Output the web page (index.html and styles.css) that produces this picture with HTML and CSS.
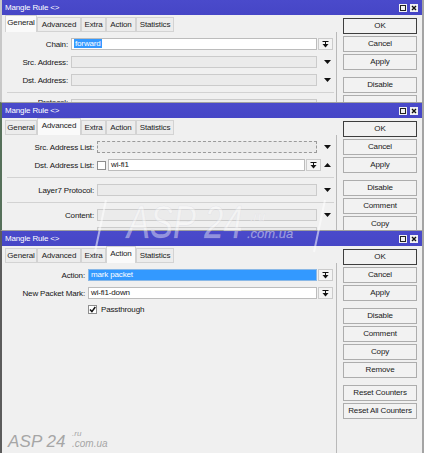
FILE: index.html
```html
<!DOCTYPE html>
<html>
<head>
<meta charset="utf-8">
<title>Mangle Rule</title>
<link rel="stylesheet" href="styles.css">
</head>
<body>
<div class="desktop">

  <!-- Window 1 : General tab -->
  <section class="win w1">
    <header class="title">
      <span class="title-text">Mangle Rule &lt;&gt;</span>
      <span class="ctrls">
        <span class="ctl"><svg width="8" height="8" viewBox="0 0 8 8"><rect width="8" height="8" fill="#f2f2f2"/><rect x="1.5" y="1.5" width="5" height="5" fill="none" stroke="#222"/></svg></span>
        <span class="ctl"><svg width="8" height="8" viewBox="0 0 8 8"><rect width="8" height="8" fill="#f2f2f2"/><path d="M2 2l4 4M6 2l-4 4" stroke="#111" stroke-width="1.4"/></svg></span>
      </span>
    </header>
    <div class="body">
      <div class="main">
        <nav class="tabs">
          <span class="tab t-gen active">General</span><span class="tab t-adv">Advanced</span><span class="tab t-ext">Extra</span><span class="tab t-act">Action</span><span class="tab t-stat">Statistics</span>
        </nav>
        <div class="form f-general">
          <div class="row">
            <span class="lbl">Chain:</span>
            <span class="field white"><span class="sel">forward</span></span>
            <span class="trail"><span class="cbtn"><svg width="7" height="7" viewBox="0 0 7 7"><path d="M0.5 0.5h6M3.5 1v2" stroke="#111"/><path d="M0.5 3h6l-3 3.5z" fill="#111"/></svg></span></span>
          </div>
          <div class="row">
            <span class="lbl">Src. Address:</span>
            <span class="field"></span>
            <span class="trail center"><svg width="7" height="4" viewBox="0 0 7 4"><path d="M0 0h7l-3.5 4z" fill="#111"/></svg></span>
          </div>
          <div class="row">
            <span class="lbl">Dst. Address:</span>
            <span class="field"></span>
            <span class="trail center"><svg width="7" height="4" viewBox="0 0 7 4"><path d="M0 0h7l-3.5 4z" fill="#111"/></svg></span>
          </div>
          <div class="sep"></div>
          <div class="row">
            <span class="lbl"><span class="cut">Protocol:</span></span>
            <span class="field"></span>
            <span class="trail center"></span>
          </div>
        </div>
      </div>
      <div class="divider"></div>
      <div class="buttons">
        <span class="btn def">OK</span>
        <span class="btn">Cancel</span>
        <span class="btn">Apply</span>
        <span class="btn gap">Disable</span>
        <span class="btn stub"></span>
      </div>
    </div>
  </section>

  <!-- Window 2 : Advanced tab -->
  <section class="win w2">
    <header class="title">
      <span class="title-text">Mangle Rule &lt;&gt;</span>
      <span class="ctrls">
        <span class="ctl"><svg width="8" height="8" viewBox="0 0 8 8"><rect width="8" height="8" fill="#f2f2f2"/><rect x="1.5" y="1.5" width="5" height="5" fill="none" stroke="#222"/></svg></span>
        <span class="ctl"><svg width="8" height="8" viewBox="0 0 8 8"><rect width="8" height="8" fill="#f2f2f2"/><path d="M2 2l4 4M6 2l-4 4" stroke="#111" stroke-width="1.4"/></svg></span>
      </span>
    </header>
    <div class="body">
      <div class="main">
        <nav class="tabs">
          <span class="tab t-gen">General</span><span class="tab t-adv active">Advanced</span><span class="tab t-ext">Extra</span><span class="tab t-act">Action</span><span class="tab t-stat">Statistics</span>
        </nav>
        <div class="form f-advanced">
          <div class="row">
            <span class="lbl">Src. Address List:</span>
            <span class="field focus"></span>
            <span class="trail center"><svg width="7" height="4" viewBox="0 0 7 4"><path d="M0 0h7l-3.5 4z" fill="#111"/></svg></span>
          </div>
          <div class="row">
            <span class="lbl">Dst. Address List:</span>
            <span class="check"></span>
            <span class="field white">wi-fi1</span>
            <span class="trail wide">
              <span class="cbtn"><svg width="7" height="7" viewBox="0 0 7 7"><path d="M0.5 0.5h6M3.5 1v2" stroke="#111"/><path d="M0.5 3h6l-3 3.5z" fill="#111"/></svg></span>
              <span class="up"><svg width="7" height="4" viewBox="0 0 7 4"><path d="M0 4h7l-3.5-4z" fill="#111"/></svg></span>
            </span>
          </div>
          <div class="sep"></div>
          <div class="row">
            <span class="lbl">Layer7 Protocol:</span>
            <span class="field"></span>
            <span class="trail center"><svg width="7" height="4" viewBox="0 0 7 4"><path d="M0 0h7l-3.5 4z" fill="#111"/></svg></span>
          </div>
          <div class="sep"></div>
          <div class="row">
            <span class="lbl">Content:</span>
            <span class="field"></span>
            <span class="trail center"><svg width="7" height="4" viewBox="0 0 7 4"><path d="M0 0h7l-3.5 4z" fill="#111"/></svg></span>
          </div>
          <div class="row">
            <span class="lbl"></span>
            <span class="field"></span>
            <span class="trail center"></span>
          </div>
        </div>
      </div>
      <div class="divider"></div>
      <div class="buttons">
        <span class="btn def">OK</span>
        <span class="btn">Cancel</span>
        <span class="btn">Apply</span>
        <span class="btn gap">Disable</span>
        <span class="btn">Comment</span>
        <span class="btn">Copy</span>
      </div>
    </div>
  </section>

  <!-- Window 3 : Action tab -->
  <section class="win w3">
    <header class="title">
      <span class="title-text">Mangle Rule &lt;&gt;</span>
      <span class="ctrls">
        <span class="ctl"><svg width="8" height="8" viewBox="0 0 8 8"><rect width="8" height="8" fill="#f2f2f2"/><rect x="1.5" y="1.5" width="5" height="5" fill="none" stroke="#222"/></svg></span>
        <span class="ctl"><svg width="8" height="8" viewBox="0 0 8 8"><rect width="8" height="8" fill="#f2f2f2"/><path d="M2 2l4 4M6 2l-4 4" stroke="#111" stroke-width="1.4"/></svg></span>
      </span>
    </header>
    <div class="body">
      <div class="main">
        <nav class="tabs">
          <span class="tab t-gen">General</span><span class="tab t-adv">Advanced</span><span class="tab t-ext">Extra</span><span class="tab t-act active">Action</span><span class="tab t-stat">Statistics</span>
        </nav>
        <div class="form f-action">
          <div class="row">
            <span class="lbl">Action:</span>
            <span class="field selected">mark packet</span>
            <span class="trail"><span class="cbtn"><svg width="7" height="7" viewBox="0 0 7 7"><path d="M0.5 0.5h6M3.5 1v2" stroke="#111"/><path d="M0.5 3h6l-3 3.5z" fill="#111"/></svg></span></span>
          </div>
          <div class="row">
            <span class="lbl">New Packet Mark:</span>
            <span class="field white">wi-fi1-down</span>
            <span class="trail"><span class="cbtn"><svg width="7" height="7" viewBox="0 0 7 7"><path d="M0.5 0.5h6M3.5 1v2" stroke="#111"/><path d="M0.5 3h6l-3 3.5z" fill="#111"/></svg></span></span>
          </div>
          <div class="row short">
            <span class="lbl"></span>
            <span class="check"><svg width="7" height="7" viewBox="0 0 7 7"><path d="M1 3.6l1.9 2 3.4-4.6" stroke="#111" stroke-width="1.5" fill="none"/></svg></span>
            <span class="chk-lbl">Passthrough</span>
          </div>
        </div>
      </div>
      <div class="divider"></div>
      <div class="buttons">
        <span class="btn def">OK</span>
        <span class="btn">Cancel</span>
        <span class="btn">Apply</span>
        <span class="btn gap">Disable</span>
        <span class="btn">Comment</span>
        <span class="btn">Copy</span>
        <span class="btn">Remove</span>
        <span class="btn gap">Reset Counters</span>
        <span class="btn">Reset All Counters</span>
      </div>
    </div>
  </section>

  <!-- watermark over the windows -->
  <div class="wm">
    <svg class="wm-frame" width="424" height="453" viewBox="0 0 424 453">
      <path d="M106 200L95 252M325 200L314 252" stroke="rgba(255,255,255,0.55)" stroke-width="2" fill="none"/>
    </svg>
    <span class="wm-main">ASP 24</span>
    <span class="wm-ru">.ru</span>
    <span class="wm-com">.com.ua</span>
  </div>

  <div class="logo">
    <span class="logo-main">ASP 24</span>
    <span class="logo-ru">.ru</span>
    <span class="logo-com">.com.ua</span>
  </div>

</div>
</body>
</html>
```

FILE: styles.css
```css
* { box-sizing: border-box; margin: 0; padding: 0; }

html, body { width: 424px; height: 453px; overflow: hidden; }

body {
  font-family: "Liberation Sans", Arial, sans-serif;
  font-size: 8px;
  letter-spacing: -0.15px;
  color: #151515;
  background: #f0f0f0;
}

.desktop {
  position: relative;
  width: 424px;
  height: 453px;
  overflow: hidden;
  background: #f0f0f0;
}

/* windows on the desktop */
.win {
  position: absolute;
  left: 0;
  width: 424px;
  display: flex;
  flex-direction: column;
  overflow: hidden;
  background: #f0f0f0;
  border-left: 2px solid #8c8c8c;
  border-right: 2px solid #a4a4a4;
}
.w1 { top: 0; height: 102px; border-left-color: #c8c8c8; }
.w2 { top: 102px; height: 128px; border-top: 1px solid #a0a0a0; border-left-color: #56705a; }
.w3 { top: 230px; height: 223px; border-top: 1px solid #a0a0a0; border-left-color: #5c5c5c; }

.title {
  height: 15px;
  flex: none;
  display: flex;
  align-items: center;
  padding: 0 4px 0 3px;
  background: linear-gradient(#4a4acb, #4646c6);
  color: #fff;
}
.title-text { font-size: 8px; }
.ctrls { margin-left: auto; display: flex; gap: 3px; }
.ctl { display: block; width: 8px; height: 8px; }
.ctl svg { display: block; }

.body { flex: 1; display: flex; min-height: 0; }

.main {
  width: 334px;
  flex: none;
  padding-left: 3px;
  display: flex;
  flex-direction: column;
}

/* tabs */
.tabs {
  display: flex;
  align-items: flex-end;
  height: 17px;
  flex: none;
}
.tab {
  height: 15px;
  line-height: 13px;
  text-align: center;
  border: 1px solid #d3d3d3;
  background: #ececec;
  color: #222;
}
.tab.active {
  height: 17px;
  line-height: 14px;
  background: #fafafa;
  border-bottom: none;
}
.t-gen { width: 32px; }
.t-adv { width: 44px; }
.t-ext { width: 25px; }
.t-act { width: 30px; }
.t-stat { width: 38px; }

/* form */
.form { padding-top: 3px; }
.f-general { --lw: 66px; }
.f-advanced { --lw: 92px; }
.f-action { --lw: 83px; }

.row {
  display: flex;
  align-items: center;
  height: 18px;
  padding-right: 2px;
}
.row.short { height: 15px; }
.lbl {
  width: var(--lw);
  flex: none;
  text-align: right;
  padding-right: 3px;
  white-space: nowrap;
}
.cut {
  display: inline-block;
  height: 6px;
  overflow: hidden;
  line-height: 9px;
  vertical-align: top;
  margin-top: -3px;
}
.field {
  flex: 1;
  height: 12px;
  line-height: 10px;
  padding-left: 2px;
  border: 1px solid #cbcbcb;
  background: #ebebeb;
  white-space: nowrap;
  overflow: hidden;
}
.field.white { background: #fff; border-color: #bcbcbc; }
.field.focus { border: 1px dashed #9a9a9a; }
.field.selected { background: #3399ff; border-color: #8ab8e6; color: #fff; }
.sel { background: #3399ff; color: #fff; padding: 0 1px; }

.trail {
  width: 17px;
  flex: none;
  display: flex;
  align-items: center;
  padding-left: 1px;
}
.trail.center { justify-content: center; padding-left: 3px; }
.trail.wide { width: 29px; }
.trail svg { display: block; }
.cbtn {
  width: 15px;
  height: 12px;
  border: 1px solid #cbcbcb;
  background: #f3f3f3;
  display: flex;
  align-items: center;
  justify-content: center;
}
.up { flex: 1; display: flex; justify-content: center; }

.check {
  width: 9px;
  height: 9px;
  flex: none;
  margin-right: 2px;
  border: 1px solid #8e8e8e;
  background: #fff;
  display: flex;
  align-items: center;
  justify-content: center;
}
.check svg { display: block; }
.chk-lbl { padding-left: 2px; }

.sep {
  height: 1px;
  background: #d2d2d2;
  margin: 3px 2px 3px 2px;
}

.divider {
  width: 1px;
  flex: none;
  margin-top: 17px;
  background: #b9b9b9;
}

/* button column */
.buttons {
  flex: 1;
  padding: 3px 5px 0 6px;
  display: flex;
  flex-direction: column;
}
.btn {
  display: block;
  flex: none;
  height: 16px;
  line-height: 14px;
  margin-bottom: 2px;
  text-align: center;
  border: 1px solid #adadad;
  background: #f2f2f2;
  color: #1a1a1a;
  white-space: nowrap;
}
.btn.def { border-color: #3e3e3e; }
.btn.gap { margin-top: 5px; }

/* watermark overlay */
.wm {
  position: absolute;
  left: 0;
  top: 0;
  width: 424px;
  height: 453px;
  pointer-events: none;
}
.wm-frame { position: absolute; left: 0; top: 0; }
.wm-main {
  position: absolute;
  left: 127px;
  top: 199px;
  font-size: 46px;
  line-height: 1;
  font-style: italic;
  letter-spacing: 0;
  color: rgba(255, 255, 255, 0.42);
  -webkit-text-stroke: 0.6px rgba(200, 200, 215, 0.3);
  transform: scaleX(0.75);
  transform-origin: left top;
  white-space: nowrap;
}
.wm-ru, .wm-com {
  position: absolute;
  font-size: 13px;
  line-height: 1;
  font-style: italic;
  letter-spacing: 0;
  color: rgba(255, 255, 255, 0.45);
  -webkit-text-stroke: 0.4px rgba(200, 200, 215, 0.25);
}
.wm-ru { left: 250px; top: 210px; }
.wm-com { left: 247px; top: 227px; }

/* bottom-left logo */
.logo {
  position: absolute;
  left: 8px;
  top: 430px;
  width: 110px;
  height: 20px;
  color: #a6a6a6;
  font-style: italic;
}
.logo-main {
  position: absolute;
  left: 0;
  top: 3px;
  font-size: 17px;
  line-height: 1;
  letter-spacing: 0.1px;
}
.logo-ru {
  position: absolute;
  left: 64px;
  top: 0;
  font-size: 8px;
  line-height: 1;
  letter-spacing: 0;
}
.logo-com {
  position: absolute;
  left: 64px;
  top: 9px;
  font-size: 10px;
  line-height: 1;
  letter-spacing: 0;
}
```
